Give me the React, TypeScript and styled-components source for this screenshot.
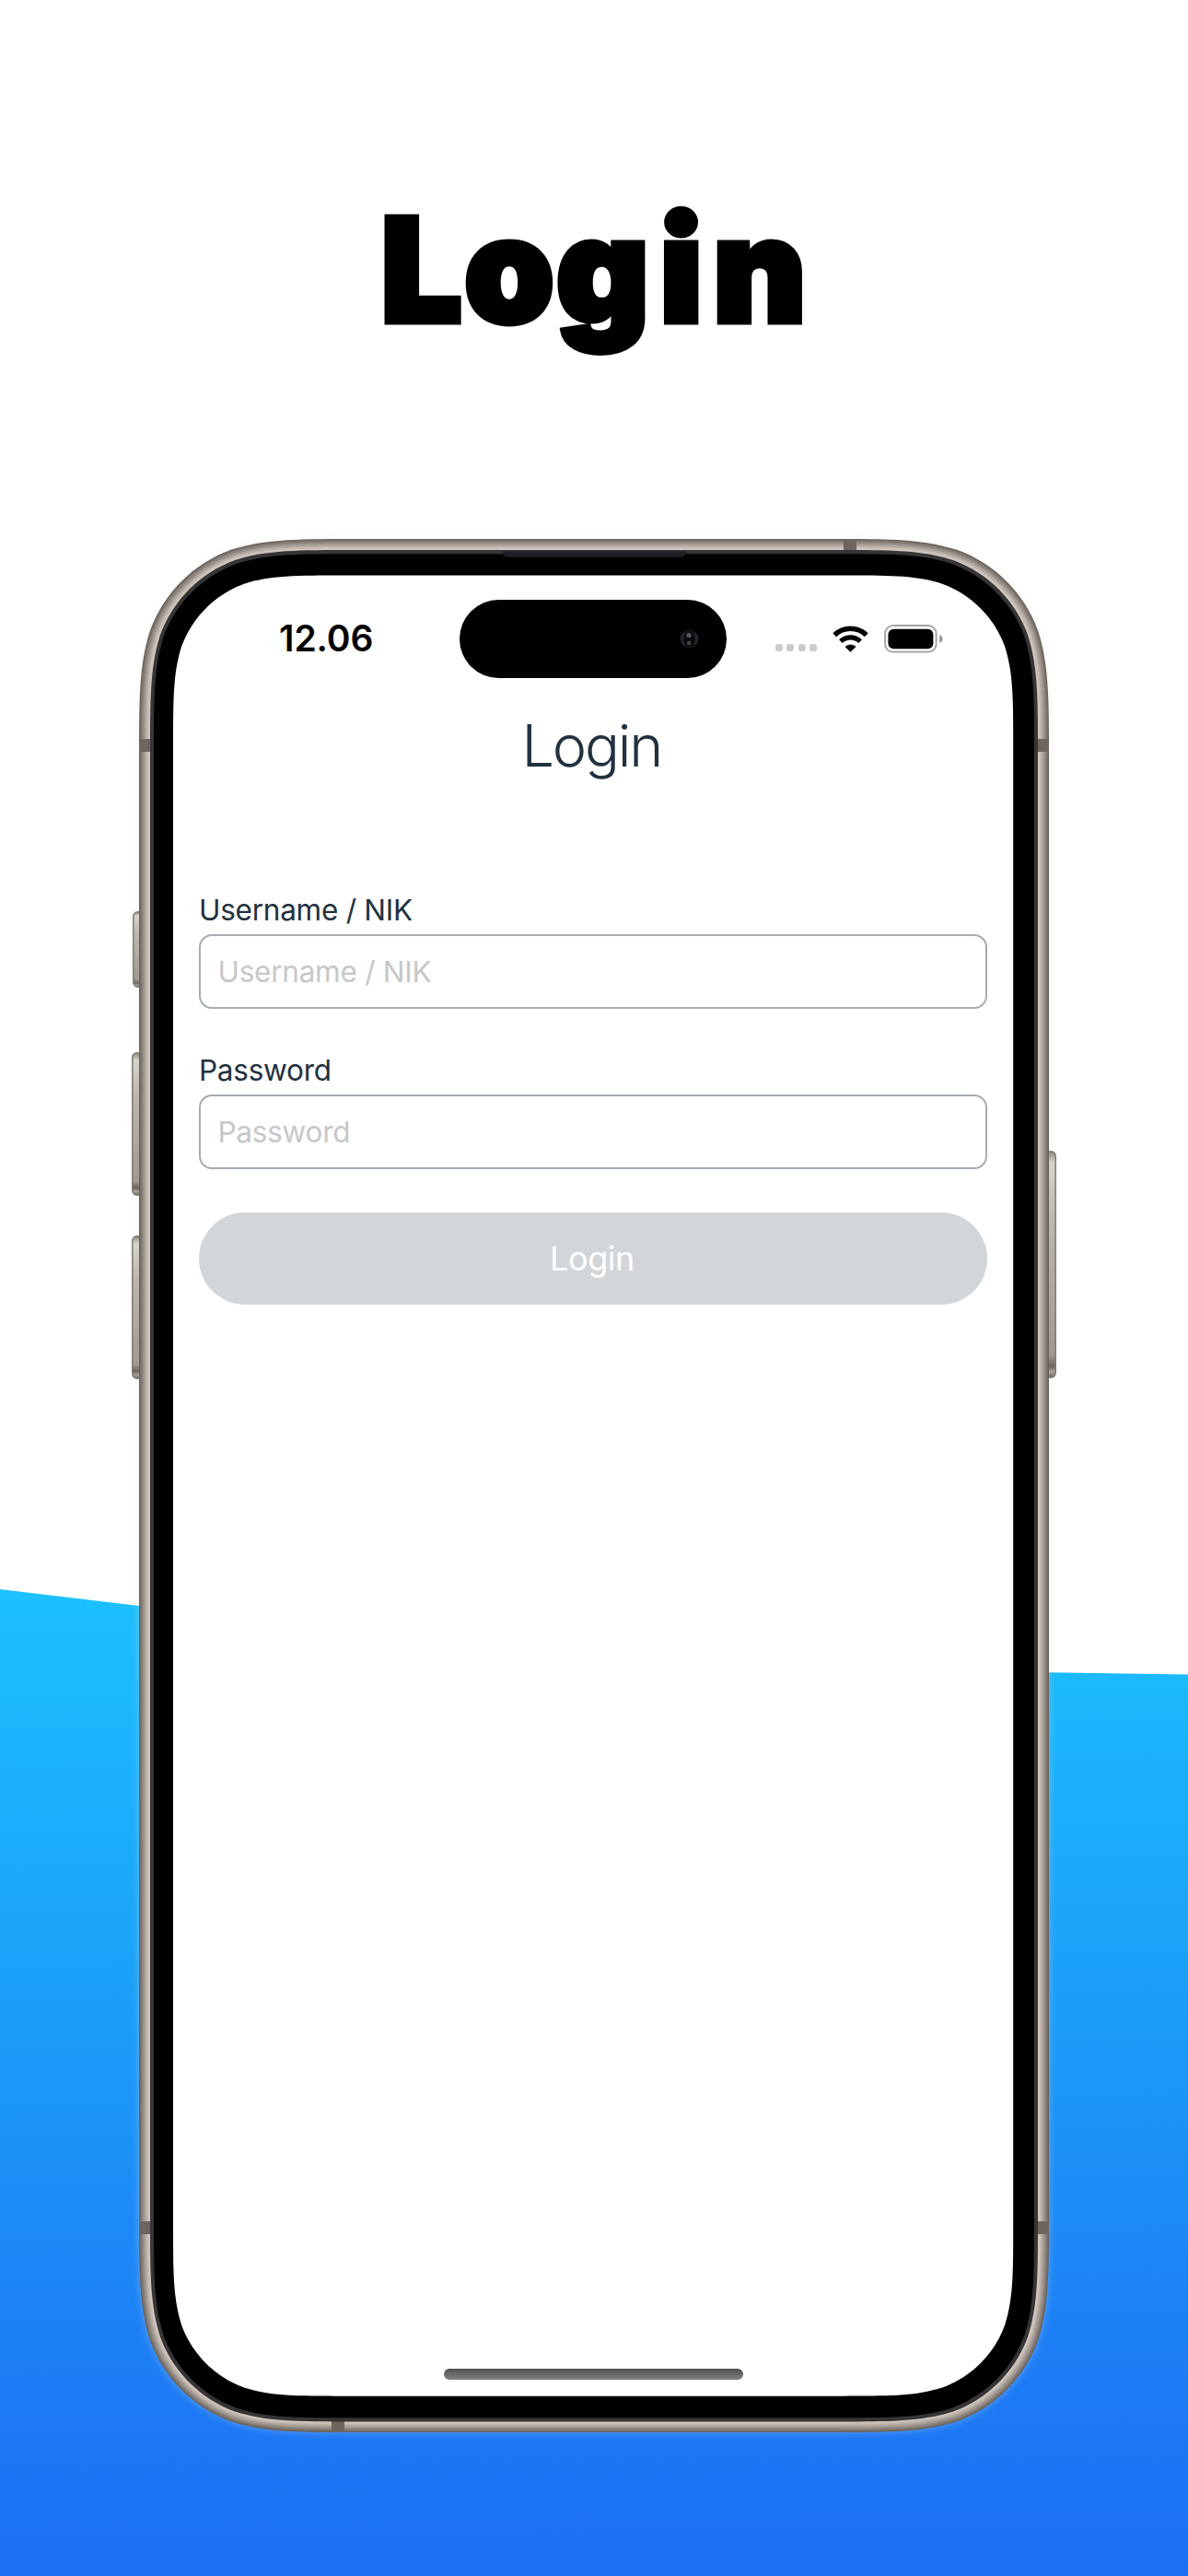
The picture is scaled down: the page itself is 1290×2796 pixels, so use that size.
import React from 'react';
import styled, { createGlobalStyle } from 'styled-components';

const GlobalStyle = createGlobalStyle`
  *, *::before, *::after { box-sizing: border-box; }
  body { margin: 0; background: #fff; }
`;

const sans = `Inter, "Liberation Sans", sans-serif`;
const ink = '#22313f';

const Page = styled.main`
  position: relative;
  isolation: isolate;
  display: flex;
  flex-direction: column;
  align-items: center;
  width: 1290px;
  height: 2796px;
  overflow: hidden;
  background: #fff;
  font-family: ${sans};
`;

const Wave = styled.div`
  position: absolute;
  z-index: -1;
  inset: 1725px 0 0 0;
  background: linear-gradient(179.5deg, #1cc1ff 0%, #1b9af8 46%, #1d7af5 82%, #1c6ff3 100%);
  clip-path: polygon(0 0, 151px 18px, 645px 66px, 1139px 90.3px, 1290px 92.5px, 1290px 100%, 0 100%);
`;

const Headline = styled.h1`
  display: flex;
  align-items: center;
  justify-content: center;
  height: 585px;
  margin: 0;
  padding-right: 1px;
  font-size: 155px;
  font-weight: 900;
  line-height: 1;
  color: #000;
  -webkit-text-stroke: 7px #000;
`;

const Kern = styled.span<{ $gap: number }>`
  letter-spacing: ${(p) => p.$gap}px;
`;

const Phone = styled.section`
  position: relative;
  flex: none;
  width: 1004px;
  height: 2055px;
  padding: 39.5px 46.5px 39.5px 45px;
`;

const Hardware = styled.svg`
  position: absolute;
  z-index: -1;
  inset: 0;
  overflow: visible;
`;

const Screen = styled.div`
  display: flex;
  flex-direction: column;
  height: 100%;
`;

const StatusBar = styled.header`
  display: grid;
  grid-template-columns: 310.5px 290.5px 1fr;
  align-items: center;
  height: 85.5px;
  margin-top: 26px;
`;

const Clock = styled.time`
  padding-left: 115px;
  font-size: 39px;
  font-weight: 600;
  line-height: 48px;
  letter-spacing: -0.1px;
  color: #000;
`;

const Island = styled.div`
  display: flex;
  align-items: center;
  justify-content: flex-end;
  height: 85.5px;
  padding-right: 30.5px;
  border-radius: 43px;
  background: #000;
`;

const Indicators = styled.div`
  display: flex;
  align-items: center;
  padding-left: 53px;
`;

const SignalDots = styled.div`
  display: flex;
  gap: 4.4px;
  margin: 20px 17px 0 0;
`;

const SignalDot = styled.i`
  width: 8px;
  height: 8px;
  border-radius: 3px;
  background: #cbcbcb;
`;

const BatteryIcon = styled.svg`
  margin-left: 17px;
`;

const ScreenTitle = styled.h2`
  margin: 35px 0 0;
  padding-right: 4px;
  font-size: 63px;
  font-weight: 300;
  line-height: 76px;
  letter-spacing: -2.2px;
  text-align: center;
  color: ${ink};
`;

const Form = styled.form`
  display: flex;
  flex-direction: column;
  margin: 115.5px 28.5px 0 28px;
`;

const Field = styled.label<{ $after: number }>`
  display: flex;
  flex-direction: column;
  margin-bottom: ${(p) => p.$after}px;
`;

const FieldName = styled.span`
  height: 51.5px;
  font-size: 31.5px;
  line-height: 50px;
  letter-spacing: -0.25px;
  color: ${ink};
`;

const Input = styled.input`
  height: 81px;
  padding: 0 18.5px;
  border: 2.4px solid #a6acb1;
  border-radius: 14px;
  outline: none;
  background: #fff;
  font-family: ${sans};
  font-size: 31.5px;
  letter-spacing: -0.25px;
  color: ${ink};
  &::placeholder { color: #c7c7c9; opacity: 1; }
`;

const Submit = styled.button`
  height: 100px;
  padding: 0 2px 0 0;
  border: 0;
  border-radius: 50px;
  background: #d2d6d9;
  font-family: ${sans};
  font-size: 36px;
  font-weight: 400;
  letter-spacing: -0.4px;
  color: #fff;
`;

const HomeIndicator = styled.div`
  width: 325px;
  height: 12.5px;
  margin: auto auto 17.5px 294px;
  border-radius: 7px;
  background: linear-gradient(#505050, #828282);
`;

/* Rounded rectangle with continuous-curvature corners. */
function squircle(x: number, y: number, w: number, h: number, r: number) {
  const a = 1.52866 * r, b = 1.08849 * r, c = 0.8684 * r;
  const d = 0.63149 * r, e = 0.07491 * r, f = 0.37282 * r, g = 0.16905 * r;
  const R = x + w, B = y + h;
  return [
    `M${x + a} ${y} H${R - a}`,
    `C${R - b} ${y} ${R - c} ${y} ${R - d} ${y + e}`,
    `C${R - f} ${y + g} ${R - g} ${y + f} ${R - e} ${y + d}`,
    `C${R} ${y + c} ${R} ${y + b} ${R} ${y + a} V${B - a}`,
    `C${R} ${B - b} ${R} ${B - c} ${R - e} ${B - d}`,
    `C${R - g} ${B - f} ${R - f} ${B - g} ${R - d} ${B - e}`,
    `C${R - c} ${B} ${R - b} ${B} ${R - a} ${B} H${x + a}`,
    `C${x + b} ${B} ${x + c} ${B} ${x + d} ${B - e}`,
    `C${x + f} ${B - g} ${x + g} ${B - f} ${x + e} ${B - d}`,
    `C${x} ${B - c} ${x} ${B - b} ${x} ${B - a} V${y + a}`,
    `C${x} ${y + b} ${x} ${y + c} ${x + e} ${y + d}`,
    `C${x + g} ${y + f} ${x + f} ${y + g} ${x + d} ${y + e}`,
    `C${x + c} ${y} ${x + b} ${y} ${x + a} ${y}Z`,
  ].join(' ');
}

const metal = ['#69625c', '#766f68', '#817972', '#8b837c', '#958d86', '#a0978f', '#aaa199', '#b4aba3', '#beb4ac', '#c7bdb5', '#d0c6be', '#cdc4bc'];

const sideKeys = [
  { x: 1, y: 404, w: 12, h: 83 },
  { x: 0, y: 557, w: 12, h: 156 },
  { x: 0, y: 756, w: 12, h: 156 },
  { x: 992, y: 664, w: 12, h: 247 },
];

const bands = [
  { x: 8, y: 217, w: 12, h: 14 },
  { x: 984, y: 217, w: 12, h: 14 },
  { x: 8, y: 1826, w: 12, h: 14 },
  { x: 984, y: 1826, w: 12, h: 14 },
  { x: 773, y: 0, w: 14, h: 12 },
  { x: 217, y: 2043, w: 14, h: 12 },
];

function DeviceBody() {
  return (
    <Hardware width="1004" height="2055" viewBox="0 0 1004 2055" aria-hidden="true">
      <defs>
        <linearGradient id="key" x1="0" y1="0" x2="0" y2="1">
          <stop offset="0" stopColor="#8b867f" />
          <stop offset="0.05" stopColor="#d6d3cd" />
          <stop offset="0.3" stopColor="#bcb7b0" />
          <stop offset="0.9" stopColor="#a19a93" />
          <stop offset="0.95" stopColor="#6c665f" />
          <stop offset="0.975" stopColor="#aaa39b" />
          <stop offset="1" stopColor="#69635d" />
        </linearGradient>
        <filter id="glow" x="-5%" y="-5%" width="110%" height="110%">
          <feGaussianBlur stdDeviation="4" />
        </filter>
      </defs>
      <path d={squircle(8, 0, 988, 2055, 158)} fill="#e9e6e2" opacity="0.35" filter="url(#glow)" />
      {sideKeys.map((k) => (
        <rect key={`${k.x}-${k.y}`} x={k.x + 0.75} y={k.y + 0.75} width={k.w - 1.5} height={k.h - 1.5} rx="5" fill="url(#key)" stroke="#827b73" strokeWidth="1.5" />
      ))}
      {metal.map((color, i) => (
        <path key={color} d={squircle(8 + i, i, 988 - 2 * i, 2055 - 2 * i, 158 - i)} fill={color} />
      ))}
      {bands.map((b) => (
        <rect key={`${b.x}-${b.y}`} x={b.x} y={b.y} width={b.w} height={b.h} fill="#6d655e" />
      ))}
      <path d={squircle(20, 12, 964, 2031.5, 146)} fill="#363435" />
      <path d={squircle(24, 16.3, 956, 2023, 142)} fill="#000" />
      <path d="M402.5 13.5H602C601 18 599 19.7 596 19.7H409C405.500 19.700 403 18 402.500 13.500Z" fill="#1f1d26" />
      <path d={squircle(45, 39.5, 912.2, 1976.2, 122)} fill="#fff" />
    </Hardware>
  );
}

function Camera() {
  return (
    <svg width="21" height="21" viewBox="0 0 21 21" aria-hidden="true">
      <circle cx="10.500" cy="10.500" r="10" fill="#15171b" />
      <path d="M4.500 4.500A9 9 0 0 0 4.500 16.500" fill="none" stroke="#23262c" strokeWidth="2.500" />
      <path d="M16.500 4.500A9 9 0 0 1 16.500 16.500" fill="none" stroke="#23262c" strokeWidth="2.500" />
      <ellipse cx="10.500" cy="10.500" rx="5.500" ry="9" fill="#08090a" />
      <circle cx="10" cy="6.500" r="2.600" fill="#5a5a5a" />
      <circle cx="10.200" cy="15" r="2.300" fill="#454545" />
    </svg>
  );
}

function Wifi() {
  return (
    <svg width="39" height="29" viewBox="0 0 39 29" aria-hidden="true">
      <path d="M2.200 10.200A25 25 0 0 1 36.800 10.200" fill="none" stroke="#000" strokeWidth="5.400" />
      <path d="M8.900 17.100A15.400 15.400 0 0 1 30.100 17.100" fill="none" stroke="#000" strokeWidth="5.200" />
      <path d="M19.500 28.600L13.800 22.900C17 20.200 22 20.200 25.200 22.900Z" fill="#000" stroke="#000" strokeWidth="0.600" strokeLinejoin="round" />
    </svg>
  );
}

function Battery() {
  return (
    <BatteryIcon width="64" height="31" viewBox="0 0 64 31" aria-hidden="true">
      <rect x="1.100" y="1.100" width="55.500" height="28.500" rx="8.500" fill="none" stroke="#a6a6a6" strokeWidth="2" />
      <rect x="4.400" y="4.800" width="49" height="21.400" rx="6" fill="#000" />
      <path d="M60.300 11C64.500 13 64.500 18 60.300 20Z" fill="#8f8f8f" />
    </BatteryIcon>
  );
}

export default function App() {
  return (
    <>
      <GlobalStyle />
      <Page>
        <Wave />
        <Headline>
          <span><Kern $gap={3}>Lo</Kern><Kern $gap={12}>gi</Kern>n</span>
        </Headline>
        <Phone>
          <DeviceBody />
          <Screen>
            <StatusBar>
              <Clock>12.06</Clock>
              <Island><Camera /></Island>
              <Indicators>
                <SignalDots>
                  {[0, 1, 2, 3].map((n) => <SignalDot key={n} />)}
                </SignalDots>
                <Wifi />
                <Battery />
              </Indicators>
            </StatusBar>
            <ScreenTitle>Login</ScreenTitle>
            <Form>
              <Field $after={41.5}>
                <FieldName>Username / NIK</FieldName>
                <Input placeholder="Username / NIK" />
              </Field>
              <Field $after={46.5}>
                <FieldName>Password</FieldName>
                <Input type="password" placeholder="Password" />
              </Field>
              <Submit type="button">Login</Submit>
            </Form>
            <HomeIndicator />
          </Screen>
        </Phone>
      </Page>
    </>
  );
}
